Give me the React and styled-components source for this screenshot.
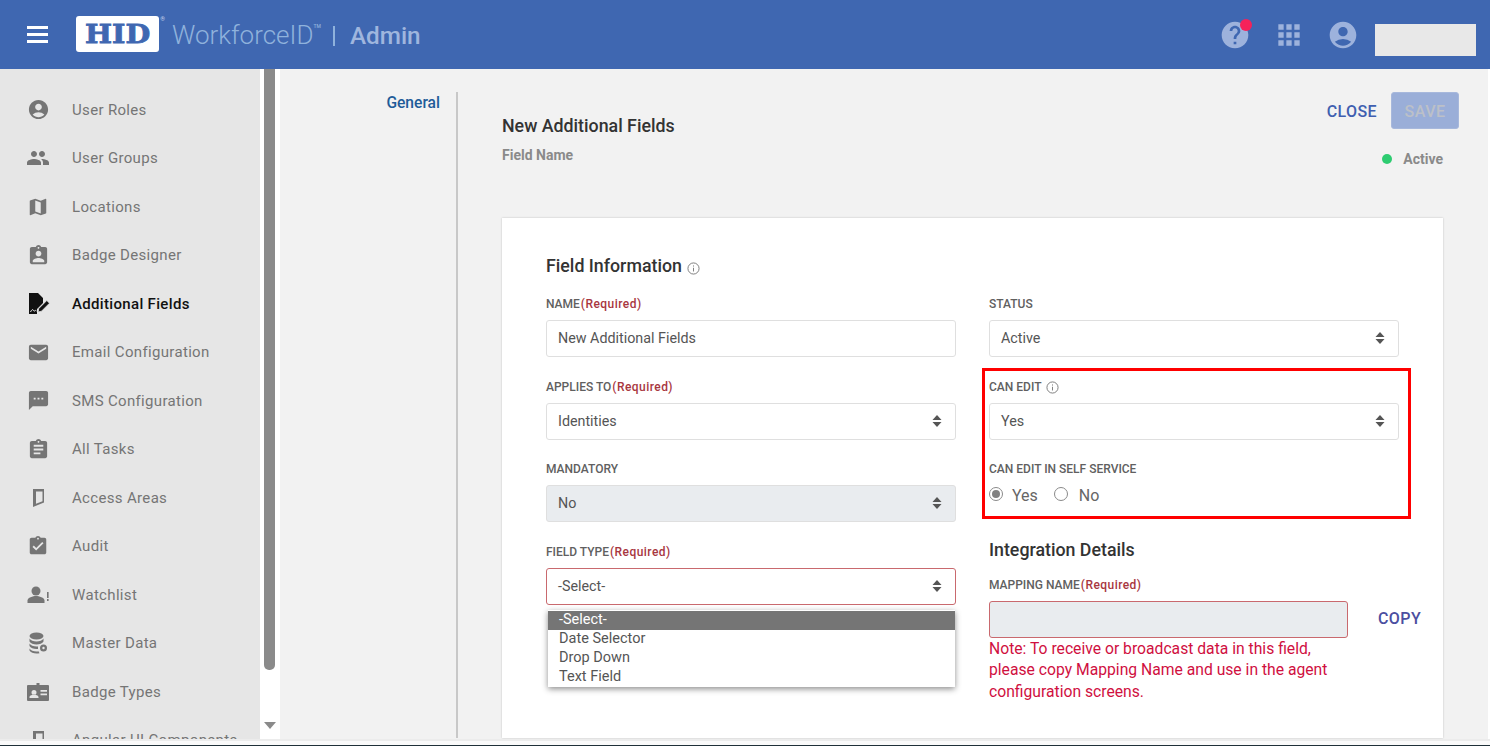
import styled, { createGlobalStyle } from 'styled-components';
import {
  MdAccountCircle,
  MdApps,
  MdAssignment,
  MdAssignmentInd,
  MdAssignmentTurnedIn,
  MdEmail,
  MdHelp,
  MdMap,
  MdPeople,
  MdSms,
} from 'react-icons/md';

const GlobalStyle = createGlobalStyle`
  html, body {
    margin: 0;
    padding: 0;
    height: 100%;
    overflow: hidden;
    background: #fff;
    font-family: Roboto, "Liberation Sans", sans-serif;
  }
  * { box-sizing: border-box; }
`;

const Page = styled.div`
  display: flex;
  flex-direction: column;
  width: 1490px;
  height: 746px;
  overflow: hidden;
`;

/* header */
const Header = styled.header`
  display: flex;
  align-items: center;
  flex: 0 0 69px;
  padding: 0 14px 0 27px;
  background: #3f67b1;
`;

const Burger = styled.div`
  display: flex;
  flex-direction: column;
  gap: 4px;
  width: 21px;
  margin-right: 28px;
  span {
    height: 3px;
    background: #fff;
  }
`;

const Logo = styled.div`
  position: relative;
  display: flex;
  align-items: center;
  justify-content: center;
  width: 83px;
  height: 36px;
  margin-top: -1px;
  margin-right: 13px;
  border-radius: 3px;
  background: #fff;
  color: #3f67b1;
  sup {
    position: absolute;
    top: -1px;
    right: -6px;
    color: #c5d3ea;
    font-size: 6px;
  }
`;

const LogoLetters = styled.span`
  display: block;
  font-family: "DejaVu Serif", "Liberation Serif", serif;
  font-size: 26px;
  font-weight: 700;
  line-height: 26px;
  letter-spacing: 0;
  -webkit-text-stroke: 0.8px #3f67b1;
  transform: scaleX(1.1);
`;

const Product = styled.div`
  display: flex;
  align-items: center;
  margin-top: 1px;
  color: #8fb2dc;
  font-size: 26px;
  font-weight: 300;
  sup {
    align-self: flex-start;
    margin-top: 3px;
    font-size: 5px;
    font-weight: 500;
  }
`;

const Separator = styled.span`
  width: 2px;
  height: 20px;
  margin: 2px 15px 0 12px;
  background: #8fb2dc;
`;

const Admin = styled.span`
  color: #9fb6de;
  font-size: 24.3px;
  font-weight: 500;
`;

const HeaderTools = styled.div`
  display: flex;
  align-items: center;
  margin-left: auto;
  color: #9db2dc;
`;

const HelpIcon = styled.div`
  position: relative;
  display: flex;
  margin-right: 22px;
  &::after {
    content: '';
    position: absolute;
    top: 0;
    right: -1px;
    width: 12px;
    height: 12px;
    border-radius: 50%;
    background: #f5225a;
  }
`;

const AppsIcon = styled.div`
  display: flex;
  margin-right: 22px;
`;

const AccountIcon = styled.div`
  display: flex;
  margin-right: 16px;
`;

const UserBox = styled.div`
  width: 101px;
  height: 32px;
  margin-top: 10px;
  background: #e8e8e8;
`;

/* body */
const Body = styled.div`
  display: flex;
  flex: 0 0 670px;
  overflow: hidden;
`;

const Sidebar = styled.nav`
  flex: 0 0 260px;
  padding-top: 16.4px;
  overflow: hidden;
  background: #e6e6e6;
`;

const NavItem = styled.div`
  display: flex;
  align-items: center;
  gap: 22px;
  height: 48.5px;
  padding-left: 26px;
  color: ${(p) => (p.$active ? '#111' : '#757575')};
  font-size: 15px;
  font-weight: ${(p) => (p.$active ? 500 : 400)};
  letter-spacing: 0.33px;
  white-space: nowrap;
`;

const NavIcon = styled.span`
  display: flex;
  flex: 0 0 24px;
  justify-content: center;
`;

const Scrollbar = styled.div`
  display: flex;
  flex: 0 0 19px;
  flex-direction: column;
  justify-content: space-between;
  padding: 0 4px 10px 4px;
  background: #fff;
`;

const ScrollThumb = styled.div`
  width: 11px;
  height: 601px;
  border-radius: 0 0 5px 5px;
  background: #8a8a8a;
`;

const ScrollArrow = styled.div`
  width: 0;
  height: 0;
  border-left: 6px solid transparent;
  border-right: 6px solid transparent;
  border-top: 7px solid #8a8a8a;
`;

const Main = styled.main`
  display: flex;
  flex: 0 0 1208px;
  padding-top: 23px;
  overflow: hidden;
  background: #f2f2f2;
`;

const Tabs = styled.div`
  flex: 0 0 178px;
  height: 646px;
  padding-right: 16px;
  border-right: 2px solid #c8c8c8;
  color: #1f5c99;
  font-size: 15.6px;
  font-weight: 500;
  line-height: 22px;
  text-align: right;
`;

const Content = styled.div`
  flex: 0 0 941px;
  margin-left: 44px;
`;

const ContentHead = styled.div`
  display: flex;
  justify-content: space-between;
  height: 126px;
  margin-right: -16px;
`;

const TitleBlock = styled.div`
  padding-top: 22.5px;
`;

const Title = styled.h1`
  margin: 0 0 9.5px;
  color: #333;
  font-size: 17.8px;
  font-weight: 500;
  line-height: 22px;
`;

const Subtitle = styled.div`
  color: #8a8a8a;
  font-size: 14px;
  font-weight: 700;
  line-height: 18px;
`;

const Actions = styled.div`
  display: flex;
  flex-direction: column;
  align-items: flex-end;
`;

const ActionRow = styled.div`
  display: flex;
  align-items: center;
  gap: 14px;
`;

const TextButton = styled.button`
  flex-shrink: 0;
  padding: 2px 0 0;
  border: 0;
  background: none;
  color: ${(p) => p.$color};
  font-family: inherit;
  font-size: 16px;
  font-weight: 500;
  letter-spacing: 0.4px;
`;

const CopyButton = styled(TextButton)`
  margin-bottom: 3px;
`;

const SaveButton = styled.button`
  width: 68px;
  height: 37px;
  padding: 2px 0 0;
  border: 1px solid #a7b8dc;
  border-radius: 3px;
  background: #9aaed8;
  color: #bcc0c8;
  font-family: inherit;
  font-size: 16px;
  font-weight: 500;
  letter-spacing: 0.5px;
`;

const StatusLine = styled.div`
  display: flex;
  align-items: center;
  gap: 11px;
  margin: 21px 16px 0 0;
  color: #8a8a8a;
  font-size: 14px;
  font-weight: 700;
  line-height: 18px;
  &::before {
    content: '';
    width: 10px;
    height: 10px;
    border-radius: 50%;
    background: #2ecc71;
  }
`;

const Card = styled.section`
  height: 520px;
  padding: 36px 44px 0;
  background: #fff;
  box-shadow: 0 0 2px rgba(0, 0, 0, 0.2);
`;

const SectionTitle = styled.h2`
  display: flex;
  align-items: center;
  gap: 5px;
  margin: ${(p) => p.$top ?? 0}px 0 ${(p) => p.$bottom ?? 16}px;
  color: #333;
  font-size: 17.8px;
  font-weight: 500;
  line-height: 24px;
  svg {
    margin-top: 4px;
  }
`;

const Columns = styled.div`
  display: grid;
  grid-template-columns: 410px 410px;
  column-gap: 33px;
`;

const Field = styled.div`
  position: relative;
  margin-bottom: ${(p) => p.$gap ?? 19.67}px;
`;

const Label = styled.div`
  display: flex;
  align-items: center;
  gap: 5px;
  height: 19px;
  padding-top: 1px;
  margin-bottom: ${(p) => p.$gap ?? 7}px;
  color: #606060;
  font-size: 12px;
  font-weight: 500;
  line-height: 18px;
  svg {
    margin-top: 1px;
  }
`;

const Required = styled.span`
  margin-left: -4px;
  color: #a8373f;
  letter-spacing: 0.45px;
`;

const Control = styled.div`
  display: flex;
  flex-shrink: 0;
  align-items: center;
  justify-content: space-between;
  width: ${(p) => p.$width ?? '100%'};
  height: 37px;
  padding: 0 13px 1px 11px;
  border: 1px solid ${(p) => (p.$error ? '#c9696e' : '#dfdfdf')};
  border-radius: 3px;
  background: ${(p) => (p.$disabled ? '#e9ecef' : '#fff')};
  color: #555;
  font-size: 14.3px;
`;

const CopyRow = styled.div`
  display: flex;
  align-items: center;
  gap: 30px;
`;

const Note = styled.p`
  width: 345px;
  margin: 0;
  color: #d0103f;
  font-size: 15.7px;
  line-height: 21.5px;
`;

const Highlighted = styled.div`
  position: relative;
`;

const RedBox = styled.div`
  position: absolute;
  top: -9px;
  left: -7px;
  right: -12px;
  bottom: -14px;
  border: 3px solid #f00;
  pointer-events: none;
`;

const RadioRow = styled.div`
  display: flex;
  align-items: center;
  height: 20px;
  color: #666;
  font-size: 16px;
`;

const Radio = styled.span`
  display: flex;
  align-items: center;
  justify-content: center;
  width: 14px;
  height: 14px;
  margin-top: -3px;
  margin-right: ${(p) => p.$gap}px;
  border: 1px solid #8a8a8a;
  border-radius: 50%;
  &::after {
    content: '';
    display: ${(p) => (p.$checked ? 'block' : 'none')};
    width: 8px;
    height: 8px;
    border-radius: 50%;
    background: #808080;
  }
`;

const RadioText = styled.span`
  margin-right: ${(p) => p.$gap ?? 0}px;
`;

const Menu = styled.ul`
  position: absolute;
  top: 68.5px;
  left: 2px;
  right: 1px;
  margin: 0;
  padding: 1px 0;
  list-style: none;
  background: #fff;
  box-shadow: 0 2px 6px rgba(0, 0, 0, 0.45);
  font-size: 14.5px;
`;

const MenuOption = styled.li`
  height: 18.7px;
  padding-left: 11px;
  background: ${(p) => (p.$selected ? '#757575' : '#fff')};
  color: ${(p) => (p.$selected ? '#fff' : '#555')};
  line-height: 18.7px;
`;

const Footer = styled.div`
  flex: 1;
  border-top: 2px solid #ececec;
  border-bottom: 1px solid #1f3038;
  background: #fafafa;
`;

const DoorIcon = () => (
  <svg width="24" height="24" viewBox="0 0 24 24" fill="currentColor">
    <path fillRule="evenodd" d="M7 3h11v13.500L7 21zM10 5.500v12.300l6.500-2.500V5.500z" />
  </svg>
);

const FieldsIcon = () => (
  <svg width="24" height="24" viewBox="0 0 24 24" fill="currentColor">
    <path d="M3 1h9l5 5v5l-6 6v5H3z" />
    <path d="M12 20l.8-3.500 8-8 2.700 2.700-8 8z" stroke="#e6e6e6" strokeWidth="0.8" />
    <path d="M4.500 20c1-2 2-3 2.800-2s.4 1.500 1.200 1 1-1 2 0" fill="none" stroke="#e6e6e6" strokeWidth="1" />
  </svg>
);

const WatchIcon = () => (
  <svg width="24" height="24" viewBox="0 0 24 24" fill="currentColor">
    <circle cx="10" cy="8" r="4.500" />
    <path d="M1.500 20v-2.500c0-3 5.500-4.500 8.500-4.500s8.500 1.500 8.500 4.500V20z" />
    <rect x="21" y="9" width="1.600" height="6" />
    <rect x="21" y="16" width="1.600" height="2" />
  </svg>
);

const DataIcon = () => (
  <svg width="24" height="24" viewBox="0 0 24 24" fill="currentColor">
    <ellipse cx="10.500" cy="5" rx="7" ry="3.500" />
    <path d="M3.500 7.500c1 2 4 3 7 3s6-1 7-3v3c-1 2-4 3-7 3s-6-1-7-3z" />
    <path d="M3.500 12.500c1 2 4 3 7 3 .5 0 1 0 1.500-.1V18c-.5.1-1 .1-1.500.1-3 0-6-1-7-3z" />
    <path d="M3.500 17.500c1 2 4 3 7 3 .7 0 1.400-.1 2-.2l1 1.900c-1 .2-2 .3-3 .3-3 0-6-1-7-3z" />
    <circle cx="17.500" cy="17" r="3.500" />
    <circle cx="17.500" cy="17" r="1.200" fill="#e6e6e6" />
  </svg>
);

const CardIcon = () => (
  <svg width="24" height="24" viewBox="0 0 24 24" fill="currentColor">
    <path
      fillRule="evenodd"
      d="M2 5h8.500V3h3v2H22a1 1 0 0 1 1 1v14a1 1 0 0 1-1 1H2a1 1 0 0 1-1-1V6a1 1 0 0 1 1-1zm6 5a2.500 2.500 0 1 0 0 5 2.500 2.500 0 0 0 0-5zm-4.500 8h9v-1c0-1.500-3-2.200-4.500-2.200s-4.500.7-4.500 2.200zM14.500 10v1.800H21V10zm0 3.500v1.800H21v-1.800z"
    />
  </svg>
);

const InfoIcon = ({ size = 13 }) => (
  <svg width={size} height={size} viewBox="0 0 14 14" fill="none" stroke="#777" strokeWidth="1">
    <circle cx="7" cy="7" r="6" />
    <path d="M7 6.200v4" />
    <path d="M7 3.700v1.200" />
  </svg>
);

const SortArrows = () => (
  <svg width="10" height="14" viewBox="0 0 10 14" fill="#555">
    <path d="M5 1l4.500 5H.5z" />
    <path d="M5 13L.5 8h9z" />
  </svg>
);

const navItems = [
  { label: 'User Roles', icon: <MdAccountCircle size={23} /> },
  { label: 'User Groups', icon: <MdPeople size={24} /> },
  { label: 'Locations', icon: <MdMap size={22} /> },
  { label: 'Badge Designer', icon: <MdAssignmentInd size={23} /> },
  { label: 'Additional Fields', icon: <FieldsIcon />, active: true },
  { label: 'Email Configuration', icon: <MdEmail size={23} /> },
  { label: 'SMS Configuration', icon: <MdSms size={23} /> },
  { label: 'All Tasks', icon: <MdAssignment size={23} /> },
  { label: 'Access Areas', icon: <DoorIcon /> },
  { label: 'Audit', icon: <MdAssignmentTurnedIn size={22} /> },
  { label: 'Watchlist', icon: <WatchIcon /> },
  { label: 'Master Data', icon: <DataIcon /> },
  { label: 'Badge Types', icon: <CardIcon /> },
  { label: 'Angular UI Components', icon: <DoorIcon /> },
];

const fieldTypes = ['-Select-', 'Date Selector', 'Drop Down', 'Text Field'];

const App = () => (
  <>
    <GlobalStyle />
    <Page>
      <Header>
        <Burger>
          <span />
          <span />
          <span />
        </Burger>
        <Logo>
          <LogoLetters>HID</LogoLetters>
          <sup>®</sup>
        </Logo>
        <Product>
          WorkforceID<sup>TM</sup>
          <Separator />
          <Admin>Admin</Admin>
        </Product>
        <HeaderTools>
          <HelpIcon>
            <MdHelp size={32} />
          </HelpIcon>
          <AppsIcon>
            <MdApps size={32} />
          </AppsIcon>
          <AccountIcon>
            <MdAccountCircle size={32} />
          </AccountIcon>
          <UserBox />
        </HeaderTools>
      </Header>

      <Body>
        <Sidebar>
          {navItems.map((item) => (
            <NavItem key={item.label} $active={item.active}>
              <NavIcon>{item.icon}</NavIcon>
              {item.label}
            </NavItem>
          ))}
        </Sidebar>
        <Scrollbar>
          <ScrollThumb />
          <ScrollArrow />
        </Scrollbar>

        <Main>
          <Tabs>General</Tabs>
          <Content>
            <ContentHead>
              <TitleBlock>
                <Title>New Additional Fields</Title>
                <Subtitle>Field Name</Subtitle>
              </TitleBlock>
              <Actions>
                <ActionRow>
                  <TextButton $color="#3f5fb0">CLOSE</TextButton>
                  <SaveButton>SAVE</SaveButton>
                </ActionRow>
                <StatusLine>Active</StatusLine>
              </Actions>
            </ContentHead>

            <Card>
              <SectionTitle>
                Field Information <InfoIcon />
              </SectionTitle>
              <Columns>
                <div>
                  <Field>
                    <Label>
                      NAME<Required>(Required)</Required>
                    </Label>
                    <Control>New Additional Fields</Control>
                  </Field>
                  <Field>
                    <Label>
                      APPLIES TO<Required>(Required)</Required>
                    </Label>
                    <Control>
                      Identities
                      <SortArrows />
                    </Control>
                  </Field>
                  <Field>
                    <Label>MANDATORY</Label>
                    <Control $disabled>
                      No
                      <SortArrows />
                    </Control>
                  </Field>
                  <Field>
                    <Label>
                      FIELD TYPE<Required>(Required)</Required>
                    </Label>
                    <Control $error>
                      -Select-
                      <SortArrows />
                    </Control>
                    <Menu>
                      {fieldTypes.map((type, i) => (
                        <MenuOption key={type} $selected={i === 0}>
                          {type}
                        </MenuOption>
                      ))}
                    </Menu>
                  </Field>
                </div>

                <div>
                  <Field>
                    <Label>STATUS</Label>
                    <Control>
                      Active
                      <SortArrows />
                    </Control>
                  </Field>
                  <Highlighted>
                    <Field>
                      <Label>
                        CAN EDIT <InfoIcon />
                      </Label>
                      <Control>
                        Yes
                        <SortArrows />
                      </Control>
                    </Field>
                    <Field $gap={0}>
                      <Label>CAN EDIT IN SELF SERVICE</Label>
                      <RadioRow>
                        <Radio $checked $gap={9} />
                        <RadioText $gap={16}>Yes</RadioText>
                        <Radio $gap={11} />
                        <RadioText>No</RadioText>
                      </RadioRow>
                    </Field>
                    <RedBox />
                  </Highlighted>
                  <SectionTitle $top={33} $bottom={13}>
                    Integration Details
                  </SectionTitle>
                  <Label $gap={6.67}>
                    MAPPING NAME<Required>(Required)</Required>
                  </Label>
                  <CopyRow>
                    <Control $error $disabled $width="359px" />
                    <CopyButton $color="#4b4ea0">COPY</CopyButton>
                  </CopyRow>
                  <Note>
                    Note: To receive or broadcast data in this field, please copy Mapping Name and use in the agent
                    configuration screens.
                  </Note>
                </div>
              </Columns>
            </Card>
          </Content>
        </Main>
      </Body>
      <Footer />
    </Page>
  </>
);

export default App;
